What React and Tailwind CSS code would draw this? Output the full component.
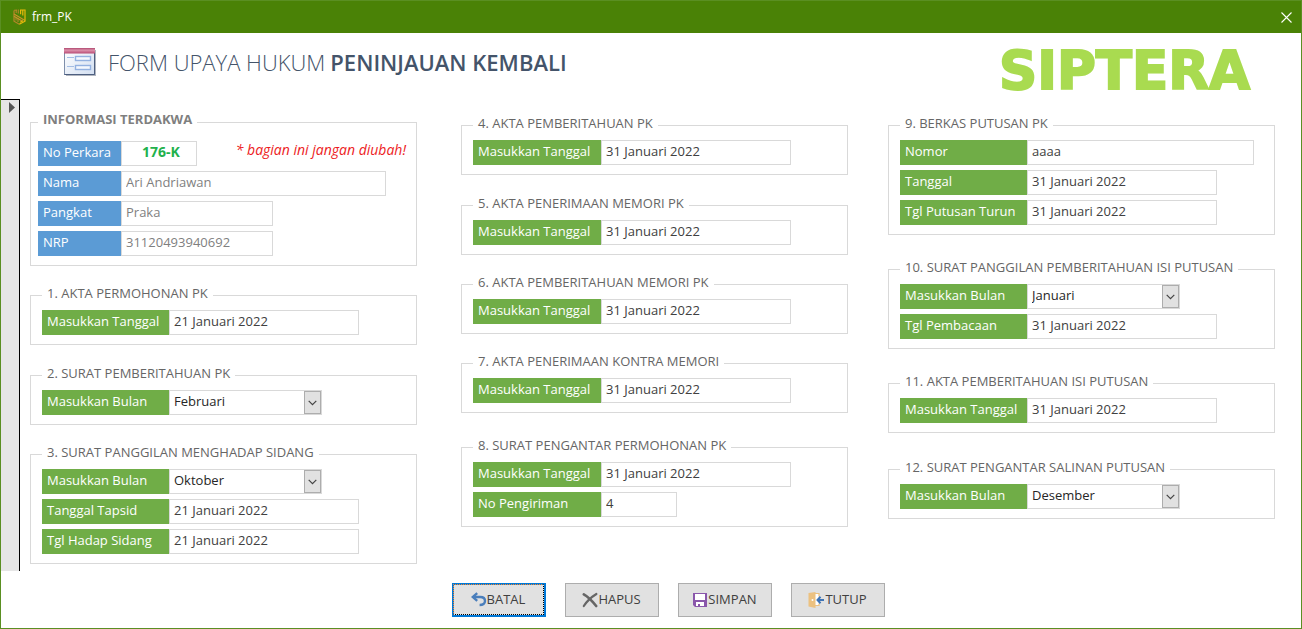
import React, { useId } from "react";

const LEFT = [
  {
    title: "1. AKTA PERMOHONAN PK",
    space: "mt-[19px]",
    rows: [{ label: "Masukkan Tanggal", value: "21 Januari 2022" }],
  },
  {
    title: "2. SURAT PEMBERITAHUAN PK",
    space: "mt-5",
    rows: [{ label: "Masukkan Bulan", value: "Februari", month: true }],
  },
  {
    title: "3. SURAT PANGGILAN MENGHADAP SIDANG",
    space: "mt-[19px]",
    rows: [
      { label: "Masukkan Bulan", value: "Oktober", month: true },
      { label: "Tanggal Tapsid", value: "21 Januari 2022" },
      { label: "Tgl Hadap Sidang", value: "21 Januari 2022" },
    ],
  },
];

const MIDDLE = [
  {
    title: "4. AKTA PEMBERITAHUAN PK",
    rows: [{ label: "Masukkan Tanggal", value: "31 Januari 2022" }],
  },
  {
    title: "5. AKTA PENERIMAAN MEMORI PK",
    space: "mt-5",
    rows: [{ label: "Masukkan Tanggal", value: "31 Januari 2022" }],
  },
  {
    title: "6. AKTA PEMBERITAHUAN MEMORI PK",
    space: "mt-[19px]",
    rows: [{ label: "Masukkan Tanggal", value: "31 Januari 2022" }],
  },
  {
    title: "7. AKTA PENERIMAAN KONTRA MEMORI",
    space: "mt-[19px]",
    rows: [{ label: "Masukkan Tanggal", value: "31 Januari 2022" }],
  },
  {
    title: "8. SURAT PENGANTAR PERMOHONAN PK",
    space: "mt-6",
    rows: [
      { label: "Masukkan Tanggal", value: "31 Januari 2022" },
      { label: "No Pengiriman", value: "4", width: "w-[76px]" },
    ],
  },
];

const RIGHT = [
  {
    title: "9. BERKAS PUTUSAN PK",
    rows: [
      { label: "Nomor", value: "aaaa", width: "w-[227px]" },
      { label: "Tanggal", value: "31 Januari 2022" },
      { label: "Tgl Putusan Turun", value: "31 Januari 2022" },
    ],
  },
  {
    title: "10. SURAT PANGGILAN PEMBERITAHUAN ISI PUTUSAN",
    space: "mt-6",
    rows: [
      { label: "Masukkan Bulan", value: "Januari", month: true },
      { label: "Tgl Pembacaan", value: "31 Januari 2022" },
    ],
  },
  {
    title: "11. AKTA PEMBERITAHUAN ISI PUTUSAN",
    space: "mt-6",
    rows: [{ label: "Masukkan Tanggal", value: "31 Januari 2022" }],
  },
  {
    title: "12. SURAT PENGANTAR SALINAN PUTUSAN",
    space: "mt-[26px]",
    rows: [{ label: "Masukkan Bulan", value: "Desember", month: true }],
  },
];

const MONTHS = [
  "Januari", "Februari", "Maret", "April", "Mei", "Juni",
  "Juli", "Agustus", "September", "Oktober", "November", "Desember",
];

function Field({
  label,
  value,
  month,
  width = "w-[190px]",
  labelClass = "w-[127px] bg-[#70ad47]",
  inputClass = "text-[#404040]",
}) {
  const id = useId();
  return (
    <div className="flex h-[25px]">
      <label htmlFor={id} className={`${labelClass} shrink-0 whitespace-nowrap pb-[2px] pl-[5px] leading-[23px] text-white`}>
        {label}
      </label>
      {month ? (
        <div className="relative h-[25px] w-[153px]">
          <select
            id={id}
            defaultValue={value}
            className="h-full w-full appearance-none border border-[#d9d9d9] bg-white pb-[2px] pl-1 text-[#262626] outline-none"
          >
            {MONTHS.map((m) => (
              <option key={m}>{m}</option>
            ))}
          </select>
          <span className="pointer-events-none absolute top-px right-px flex h-[23px] w-[17px] items-center justify-center border border-[#adadad] bg-[#e1e1e1]">
            <svg width="9" height="6" viewBox="0 0 9 6" fill="none" stroke="#444" strokeWidth="1.2">
              <path d="M0.7 0.8 4.5 4.6 8.3 0.8" />
            </svg>
          </span>
        </div>
      ) : (
        <input
          id={id}
          defaultValue={value}
          className={`${width} ${inputClass} h-[25px] min-w-0 border border-[#d9d9d9] bg-white pb-1 pl-1 outline-none`}
        />
      )}
    </div>
  );
}

function Section({ title, rows, space = "", labelClass }) {
  return (
    <fieldset className={`${space} min-w-0 border border-[#d9d9d9] pb-[9px] pl-[11px]`}>
      <legend className="h-[21px] px-[5px] pb-[5px] leading-4 whitespace-nowrap text-[#666]">{title}</legend>
      <div className="flex flex-col gap-[5px] pt-1">
        {rows.map((row) => (
          <Field key={row.label} {...row} labelClass={labelClass} />
        ))}
      </div>
    </fieldset>
  );
}

function TerdakwaSection() {
  const blue = "w-[83px] bg-[#5b9bd5]";
  return (
    <fieldset className="min-w-0 border border-[#d9d9d9] pr-[10px] pb-[9px] pl-[7px]">
      <legend className="h-[21px] px-[5px] pb-[5px] leading-[14px] font-bold whitespace-nowrap text-[#7f7f7f]">
        INFORMASI TERDAKWA
      </legend>
      <div className="flex flex-col gap-[5px] pt-2">
        <div className="flex items-start justify-between">
          <Field
            label="No Perkara"
            value="176-K"
            width="w-[76px]"
            labelClass={blue}
            inputClass="text-center text-sm font-bold text-[#22b14c]"
          />
          <p className="text-sm leading-[18px] text-[#ed1c24] italic">* bagian ini jangan diubah!</p>
        </div>
        <Field label="Nama" value="Ari Andriawan" width="w-[265px]" labelClass={blue} inputClass="text-[#7f7f7f]" />
        <Field label="Pangkat" value="Praka" width="w-[152px]" labelClass={blue} inputClass="text-[#7f7f7f]" />
        <Field label="NRP" value="31120493940692" width="w-[152px]" labelClass={blue} inputClass="text-[#7f7f7f]" />
      </div>
    </fieldset>
  );
}

function ShieldLogo() {
  return (
    <svg width="13" height="16" viewBox="0 0 13 16" fill="none">
      <path d="M1 1.5V12.2L6.3 15.3" stroke="#b5852a" strokeWidth="1.2" />
      <path d="M3.2 0.5V4M5.3 0.5V4.5M1 1.2H4M3 8.5V11.5M5 9.5V13" stroke="#b5852a" strokeWidth="1.1" />
      <path d="M1 5 12 11.5M1 7.2 9.5 12.3" stroke="#c8912a" strokeWidth="1.2" />
      <path d="M7.6 0.5V5.2M9.8 0.5V6.5M12 0.5V12.2L6.3 15.3M7 1H12" stroke="#e9b90c" strokeWidth="1.2" />
      <path d="M7.2 13.2 10 11.8" stroke="#e9b90c" strokeWidth="1.1" />
    </svg>
  );
}

function FormIcon() {
  return (
    <svg width="33" height="30" viewBox="0 0 33 30">
      <defs>
        <linearGradient id="form-head" x1="0" y1="0" x2="0" y2="1">
          <stop offset="0" stopColor="#b04a70" />
          <stop offset="0.4" stopColor="#dc90aa" />
          <stop offset="1" stopColor="#b84a74" />
        </linearGradient>
        <linearGradient id="form-body" x1="0" y1="0" x2="1" y2="1">
          <stop offset="0" stopColor="#ffffff" />
          <stop offset="1" stopColor="#d3dff1" />
        </linearGradient>
      </defs>
      <rect x="2" y="2" width="30" height="26" fill="#7c8494" opacity="0.6" />
      <rect x="0.5" y="0.5" width="30" height="26" fill="url(#form-body)" stroke="#7f8fab" />
      <path d="M30.500 5V26.500H0.500" fill="none" stroke="#4d5f80" />
      <rect x="0" y="0" width="31" height="5.500" fill="url(#form-head)" />
      <path d="M3 9.500H10M3 18.500H10" stroke="#a3bde4" strokeWidth="1.200" />
      <rect x="11.500" y="8.500" width="15" height="4" fill="#f4f8fe" stroke="#93b1e0" strokeWidth="1.400" />
      <rect x="11.500" y="17.500" width="15" height="4" fill="#f4f8fe" stroke="#93b1e0" strokeWidth="1.400" />
    </svg>
  );
}

function UndoIcon() {
  return (
    <svg width="16" height="16" viewBox="0 0 16 16" fill="none" stroke="#4a7ebb" strokeWidth="2.4">
      <path d="M6.2 1.2 1.8 5 6.2 8.8" />
      <path d="M2 5H9.2C12.4 5 14 6.6 14 9C14 11.6 12 13 8.6 13" />
    </svg>
  );
}

function DeleteIcon() {
  return (
    <svg width="16" height="16" viewBox="0 0 16 16" fill="none" stroke="#666" strokeLinecap="round">
      <path d="M1.800 2.400C5 4.200 10.500 9.400 14.200 14" strokeWidth="2.600" />
      <path d="M14.400 2C9.500 5 4.500 9.800 1.800 14" strokeWidth="2.200" />
    </svg>
  );
}

function SaveIcon() {
  return (
    <svg width="16" height="16" viewBox="0 0 16 16">
      <path d="M1 1H15V15H3L1 13Z" fill="#8a57ab" />
      <rect x="3" y="2" width="10" height="6" fill="#fff" />
      <rect x="4" y="10" width="8" height="4" fill="#fff" />
      <rect x="6" y="12" width="2" height="2" fill="#8a57ab" />
    </svg>
  );
}

function CloseDoorIcon() {
  return (
    <svg width="17" height="16" viewBox="0 0 17 16">
      <rect x="6" y="2" width="5" height="12" fill="#fff" />
      <path d="M7 1.500H11V4.500M7 13.500H11V11.500" fill="none" stroke="#ecc180" strokeWidth="1.200" />
      <path d="M0.500 1 7.500 0V16L0.500 14.500Z" fill="#ecc180" />
      <circle cx="4.500" cy="8" r="1" fill="#fff" />
      <path d="M16 8H10" stroke="#3f74b5" strokeWidth="2" />
      <path d="M12.500 4.800 9.500 8 12.500 11.200" fill="none" stroke="#3f74b5" strokeWidth="2" />
    </svg>
  );
}

function ActionButton({ icon, children, focused }) {
  return (
    <button
      type="button"
      className={`flex h-[34px] w-[94px] border bg-[#e1e1e1] text-[#404040] ${
        focused ? "border-[#0078d7] pr-px pb-px ring-1 ring-[#0078d7] ring-inset" : "border-[#adadad] p-px"
      }`}
    >
      <span
        className={`flex h-full w-full items-center justify-center border border-dotted ${
          focused ? "border-t-[#ff8728] border-r-black border-b-black border-l-[#ff8728]" : "border-transparent"
        }`}
      >
        {icon}
        {children}
      </span>
    </button>
  );
}

export default function App() {
  return (
    <div className="flex min-h-screen flex-col border border-[#5a8f22] bg-white font-['Open_Sans','Noto_Sans',sans-serif] text-[13px]">
      <header className="flex h-8 items-center justify-between bg-[#4a8206] pr-[7px] pl-3 text-white">
        <div className="flex items-center gap-[6px] text-xs">
          <ShieldLogo />
          <span>frm_PK</span>
        </div>
        <button type="button" aria-label="Tutup jendela" className="flex h-4 w-4 items-center justify-center">
          <svg width="11" height="11" viewBox="0 0 11 11" stroke="#fff" strokeWidth="1.1">
            <path d="M0.500 0.500 10.500 10.500M10.500 0.500 0.500 10.500" />
          </svg>
        </button>
      </header>

      <div className="flex h-[66px] items-start justify-between pr-[51px] pl-[63px]">
        <div className="flex items-start gap-[11px] pt-[15px]">
          <FormIcon />
          <h1 className="flex gap-[5px] text-[22px] leading-7 text-[#44546a]">
            <span className="font-light">FORM UPAYA HUKUM</span>
            <span className="font-semibold">PENINJAUAN KEMBALI</span>
          </h1>
        </div>
        <div className="pt-2 font-['DejaVu_Sans',sans-serif] text-[53px] leading-[60px] font-bold text-[#a9db50] [-webkit-text-stroke:2px_#a9db50]">
          SIPTERA
        </div>
      </div>

      <main className="flex pr-[26px]">
        <div className="w-[19px] shrink-0 border-t border-r border-black bg-[#e6e6e6] pt-[2px] pl-2">
          <svg width="6" height="11" viewBox="0 0 6 11" fill="#555">
            <path d="M0 0 6 5.500 0 11Z" />
          </svg>
        </div>
        <div className="flex flex-1 gap-10 pb-[7px] pl-[10px]">
          <div className="mr-1 min-w-0 flex-1 pt-[13px]">
            <TerdakwaSection />
            {LEFT.map((s) => (
              <Section key={s.title} {...s} />
            ))}
          </div>
          <div className="min-w-0 flex-1 pt-4">
            {MIDDLE.map((s) => (
              <Section key={s.title} {...s} labelClass="w-32 bg-[#70ad47]" />
            ))}
          </div>
          <div className="min-w-0 flex-1 pt-4">
            {RIGHT.map((s) => (
              <Section key={s.title} {...s} />
            ))}
          </div>
        </div>
      </main>

      <footer className="flex justify-center gap-[19px] pt-3 pb-[11px] pl-[34px]">
        <ActionButton icon={<UndoIcon />} focused>BATAL</ActionButton>
        <ActionButton icon={<DeleteIcon />}>HAPUS</ActionButton>
        <ActionButton icon={<SaveIcon />}>SIMPAN</ActionButton>
        <ActionButton icon={<CloseDoorIcon />}>TUTUP</ActionButton>
      </footer>
    </div>
  );
}
